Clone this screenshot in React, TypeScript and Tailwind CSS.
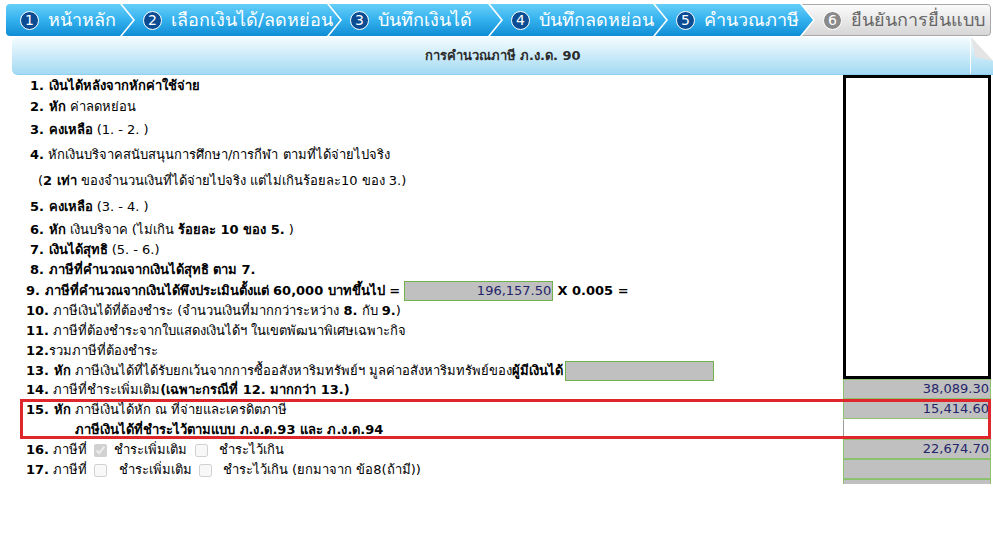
import React from "react";

const FONT = { fontFamily: "Tahoma, 'DejaVu Sans', 'Noto Sans', sans-serif" };

type Step = { n: number; label: string; width: string; first?: boolean; last?: boolean };

const STEPS: Step[] = [
  { n: 1, label: "หน้าหลัก", width: "w-[127px]", first: true },
  { n: 2, label: "เลือกเงินได้/ลดหย่อน", width: "w-[218px]" },
  { n: 3, label: "บันทึกเงินได้", width: "w-[172px]" },
  { n: 4, label: "บันทึกลดหย่อน", width: "w-[176px]" },
  { n: 5, label: "คำนวณภาษี", width: "w-[158px]" },
  { n: 6, label: "ยืนยันการยื่นแบบ", width: "w-[189px]", last: true },
];

function StepTab({ step }: { step: Step }) {
  const clip = step.first
    ? "[clip-path:polygon(0_0,calc(100%-13px)_0,100%_50%,calc(100%-13px)_100%,0_100%)]"
    : step.last
      ? "[clip-path:polygon(0_0,100%_0,100%_100%,0_100%,13px_50%)]"
      : "[clip-path:polygon(0_0,calc(100%-13px)_0,100%_50%,calc(100%-13px)_100%,0_100%,13px_50%)]";
  const bg = step.last
    ? "bg-gradient-to-b from-[#fbfbfb] to-[#d6d6d6] text-[#666] border-y border-r border-[#a9a9a9] rounded-r-[4px]"
    : "bg-gradient-to-b from-[#66cff8] via-[#32b1ee] to-[#0e8dd5] text-white";
  return (
    <div
      className={`${step.width} ${clip} ${bg} ${step.first ? "pl-[14px]" : "-ml-[11px] pl-[21px]"} flex h-full shrink-0 items-center gap-[9px]`}
    >
      <span
        className={`flex h-[19px] w-[19px] items-center justify-center rounded-full border border-white text-[14px] leading-none text-white ${
          step.last ? "bg-[#8a8a8a]" : "bg-[#0b4c93]"
        }`}
      >
        {step.n}
      </span>
      <span className="whitespace-nowrap text-[18px] leading-none">{step.label}</span>
    </div>
  );
}

function Cell({ value, white }: { value?: string; white?: boolean }) {
  return (
    <div
      className={`flex h-[20px] w-[148px] items-center justify-end border pr-[1px] text-[13px] text-[#25256b] ${
        white ? "border-white border-l-[#9a9a9a] bg-white" : "border-[#8cc26d] bg-[#c0c0c0]"
      }`}
    >
      {value}
    </div>
  );
}

function Field({ value, className = "" }: { value?: string; className?: string }) {
  return (
    <span
      className={`inline-flex h-[20px] w-[149px] items-center justify-end border border-[#6fb24e] bg-[#c0c0c0] pr-[1px] align-middle text-[13px] font-normal text-[#25256b] ${className}`}
    >
      {value}
    </span>
  );
}

function Row({ h, pl, children }: { h: string; pl: string; children: React.ReactNode }) {
  return <div className={`flex ${h} ${pl} items-center whitespace-nowrap pt-[2px]`}>{children}</div>;
}

export default function App() {
  return (
    <div className="h-[540px] w-[993px] overflow-hidden bg-white text-[13px] text-black" style={FONT}>
      {/* step bar */}
      <div className="ml-[6px] mt-[4px] flex h-[32px] w-[985px] overflow-hidden rounded-[4px] bg-white">
        {STEPS.map((s) => (
          <StepTab key={s.n} step={s} />
        ))}
      </div>

      {/* header */}
      <div className="relative ml-[12px] mt-[1px] flex h-[38px] w-[981px] items-center justify-center rounded-l-[6px] border-b border-[#8fd0ee] bg-gradient-to-b from-[#f4fcff] to-[#a3daf3]">
        <span className="text-[13px] font-bold text-[#2b2b2b]">การคำนวณภาษี ภ.ง.ด. 90</span>
        <div className="absolute right-[22px] top-0 h-full w-px bg-white" />
        <svg className="absolute right-0 top-0" width="22" height="24" viewBox="0 0 22 24">
          <polygon points="0,0 22,24 22,0" fill="#ffffff" />
          <polygon points="0,0 22,24 4,20" fill="#e4e4e4" />
        </svg>
      </div>

      <div className="ml-[20px] w-[971px]">
        {/* rows 1-13 with tall box */}
        <div className="flex">
          <div className="w-[823px]">
            <Row h="h-[20px]" pl="pl-[10px]">
              <b>1. เงินได้หลังจากหักค่าใช้จ่าย</b>
            </Row>
            <Row h="h-[21px]" pl="pl-[10px]">
              <b>2. หัก</b>&nbsp;ค่าลดหย่อน
            </Row>
            <Row h="h-[25px]" pl="pl-[10px]">
              <b>3. คงเหลือ</b>&nbsp;(1. - 2. )
            </Row>
            <Row h="h-[26px]" pl="pl-[10px]">
              <b>4.</b>&nbsp;หักเงินบริจาคสนับสนุนการศึกษา/การกีฬา ตามที่ได้จ่ายไปจริง
            </Row>
            <Row h="h-[26px]" pl="pl-[18px]">
              (<b>2 เท่า</b>&nbsp;ของจำนวนเงินที่ได้จ่ายไปจริง แต่ไม่เกินร้อยละ10 ของ 3.)
            </Row>
            <Row h="h-[25px]" pl="pl-[10px]">
              <b>5. คงเหลือ</b>&nbsp;(3. - 4. )
            </Row>
            <Row h="h-[21px]" pl="pl-[10px]">
              <b>6. หัก</b>&nbsp;เงินบริจาค (ไม่เกิน&nbsp;<b>ร้อยละ 10 ของ 5.</b>&nbsp;)
            </Row>
            <Row h="h-[20px]" pl="pl-[10px]">
              <b>7. เงินได้สุทธิ</b>&nbsp;(5. - 6.)
            </Row>
            <Row h="h-[20px]" pl="pl-[10px]">
              <b>8. ภาษีที่คำนวณจากเงินได้สุทธิ ตาม 7.</b>
            </Row>
            <Row h="h-[21px]" pl="pl-[6px]">
              <b>9. ภาษีที่คำนวณจากเงินได้พึงประเมินตั้งแต่ 60,000 บาทขึ้นไป =</b>&nbsp;
              <Field value="196,157.50" />
              &nbsp;<b>X 0.005 =</b>
            </Row>
            <Row h="h-[20px]" pl="pl-[6px]">
              <b>10.</b>&nbsp;ภาษีเงินได้ที่ต้องชำระ (จำนวนเงินที่มากกว่าระหว่าง&nbsp;<b>8.</b>&nbsp;กับ&nbsp;<b>9.</b>)
            </Row>
            <Row h="h-[20px]" pl="pl-[6px]">
              <b>11.</b>&nbsp;ภาษีที่ต้องชำระจากใบแสดงเงินได้ฯ ในเขตพัฒนาพิเศษเฉพาะกิจ
            </Row>
            <Row h="h-[20px]" pl="pl-[6px]">
              <b>12.</b>รวมภาษีที่ต้องชำระ
            </Row>
            <Row h="h-[19px]" pl="pl-[6px]">
              <b>13. หัก</b>&nbsp;ภาษีเงินได้ที่ได้รับยกเว้นจากการซื้ออสังหาริมทรัพย์ฯ มูลค่าอสังหาริมทรัพย์ของ
              <b>ผู้มีเงินได้</b>
              <Field className="ml-[2px]" />
            </Row>
          </div>
          <div className="h-[304px] w-[148px] border-[3px] border-black bg-white" />
        </div>

        {/* rows 14-17 */}
        <div className="flex items-center">
          <Row h="h-[20px] w-[823px]" pl="pl-[6px]">
            <b>14.</b>&nbsp;ภาษีที่ชำระเพิ่มเติม<b>(เฉพาะกรณีที่ 12. มากกว่า 13.)</b>
          </Row>
          <Cell value="38,089.30" />
        </div>

        <div className="relative">
          <div className="flex items-center">
            <Row h="h-[20px] w-[823px]" pl="pl-[6px]">
              <b>15. หัก</b>&nbsp;ภาษีเงินได้หัก ณ ที่จ่ายและเครดิตภาษี
            </Row>
            <Cell value="15,414.60" />
          </div>
          <div className="flex items-center">
            <Row h="h-[20px] w-[823px]" pl="pl-[55px]">
              <b>ภาษีเงินได้ที่ชำระไว้ตามแบบ ภ.ง.ด.93 และ ภ.ง.ด.94</b>
            </Row>
            <Cell white />
          </div>
          <div className="pointer-events-none absolute inset-0 border-[3px] border-[#e0262d]" />
        </div>

        <div className="flex items-center">
          <Row h="h-[20px] w-[823px]" pl="pl-[6px]">
            <b>16.</b>&nbsp;ภาษีที่&nbsp;
            <input type="checkbox" checked disabled readOnly className="mx-[3px] h-[13px] w-[13px]" />
            &nbsp;ชำระเพิ่มเติม&nbsp;
            <input type="checkbox" disabled className="mx-[3px] h-[13px] w-[13px]" />
            &nbsp;&nbsp;ชำระไว้เกิน
          </Row>
          <Cell value="22,674.70" />
        </div>
        <div className="flex items-center">
          <Row h="h-[20px] w-[823px]" pl="pl-[6px]">
            <b>17.</b>&nbsp;ภาษีที่&nbsp;
            <input type="checkbox" disabled className="mx-[3px] h-[13px] w-[13px]" />
            &nbsp;&nbsp;ชำระเพิ่มเติม&nbsp;
            <input type="checkbox" disabled className="mx-[3px] h-[13px] w-[13px]" />
            &nbsp;&nbsp;ชำระไว้เกิน (ยกมาจาก ข้อ8(ถ้ามี))
          </Row>
          <Cell />
        </div>
        <div className="ml-[823px] h-[5px] w-[148px] border-x border-t border-[#8cc26d] bg-[#c0c0c0]" />
      </div>
    </div>
  );
}
